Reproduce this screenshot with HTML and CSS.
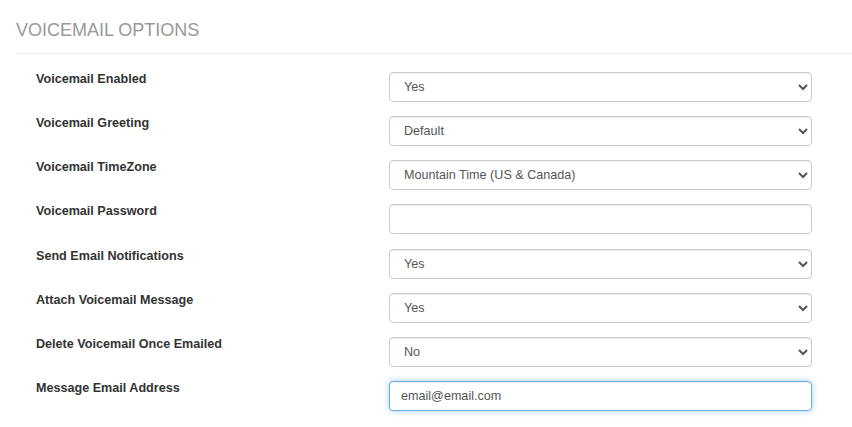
FILE: index.html
```html
<!DOCTYPE html>
<html lang="en">
<head>
<meta charset="utf-8">
<title>Voicemail Options</title>
<link rel="stylesheet" href="styles.css">
</head>
<body>
<div class="panel">
  <h3 class="panel-title">VOICEMAIL OPTIONS</h3>
  <form class="form">
    <div class="row">
      <label class="label">Voicemail Enabled</label>
      <select class="control"><option selected>Yes</option><option>No</option></select>
    </div>
    <div class="row">
      <label class="label">Voicemail Greeting</label>
      <select class="control"><option selected>Default</option><option>Custom</option></select>
    </div>
    <div class="row">
      <label class="label">Voicemail TimeZone</label>
      <select class="control"><option>Pacific Time (US &amp; Canada)</option><option selected>Mountain Time (US &amp; Canada)</option><option>Central Time (US &amp; Canada)</option><option>Eastern Time (US &amp; Canada)</option></select>
    </div>
    <div class="row">
      <label class="label">Voicemail Password</label>
      <input class="control input" type="password" value="">
    </div>
    <div class="row">
      <label class="label">Send Email Notifications</label>
      <select class="control"><option selected>Yes</option><option>No</option></select>
    </div>
    <div class="row">
      <label class="label">Attach Voicemail Message</label>
      <select class="control"><option selected>Yes</option><option>No</option></select>
    </div>
    <div class="row">
      <label class="label">Delete Voicemail Once Emailed</label>
      <select class="control"><option>Yes</option><option selected>No</option></select>
    </div>
    <div class="row">
      <label class="label">Message Email Address</label>
      <input class="control input focused" type="text" value="email@email.com">
    </div>
  </form>
</div>
</body>
</html>
```
FILE: styles.css
```css
html, body {
  margin: 0;
  padding: 0;
  background: #fff;
}
body {
  font-family: "Liberation Sans", Arial, sans-serif;
  font-size: 13px;
  color: #333;
}
.panel {
  padding: 20px 0 0 16px;
}
.panel-title {
  margin: 0;
  font-size: 18px;
  font-weight: normal;
  line-height: 20px;
  color: #999;
  padding-bottom: 13px;
  border-bottom: 1px solid #eee;
}
.form {
  padding: 16px 0 0 20px;
}
.row {
  display: grid;
  grid-template-columns: 353px 423px;
  align-items: start;
  margin-bottom: 12.14px;
}
.label {
  font-weight: bold;
  font-size: 12.6px;
  line-height: 18.57px;
  color: #333;
}
.control {
  box-sizing: border-box;
  margin: 2px 0 0 0;
  height: 30px;
  width: 423px;
  font-family: "Liberation Sans", Arial, sans-serif;
  font-size: 12.6px;
  color: #555;
  background: #fff;
  border: 1px solid #ccc;
  border-radius: 4px;
  box-shadow: inset 0 1px 1px rgba(0,0,0,.075);
  padding: 0 10px;
  outline: none;
}
.input {
  padding: 0 11px;
}
.focused {
  border-color: #66afe9;
  box-shadow: inset 0 1px 1px rgba(0,0,0,.075), 0 0 6px rgba(102,175,233,.6);
}
```
